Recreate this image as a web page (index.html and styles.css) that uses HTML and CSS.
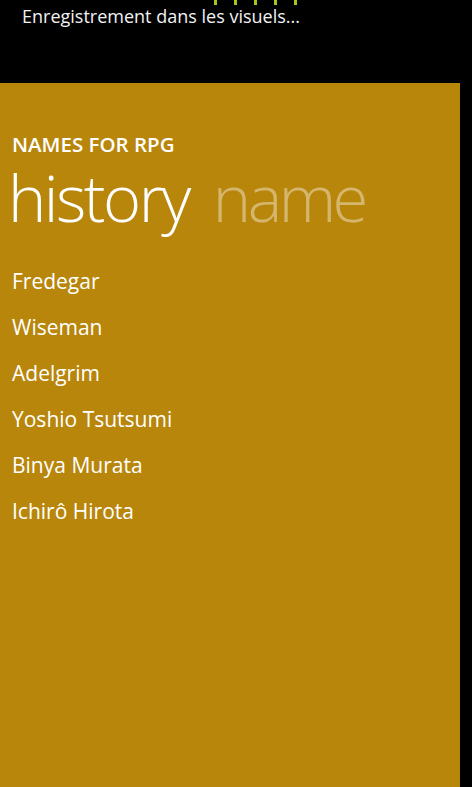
FILE: index.html
```html
<!DOCTYPE html>
<html>
<head>
<meta charset="utf-8">
<link rel="stylesheet" href="styles.css">
</head>
<body>
<div class="status">
  <div class="dots"><span></span><span></span><span></span><span></span><span></span></div>
  <div class="status-text">Enregistrement dans les visuels...</div>
</div>
<div class="panel">
  <div class="app-title">NAMES FOR RPG</div>
  <div class="pivot">
    <span class="pivot-item active">history</span>
    <span class="pivot-item">name</span>
  </div>
  <ul class="list">
    <li>Fredegar</li>
    <li>Wiseman</li>
    <li>Adelgrim</li>
    <li>Yoshio Tsutsumi</li>
    <li>Binya Murata</li>
    <li>Ichirô Hirota</li>
  </ul>
</div>
</body>
</html>
```
FILE: styles.css
```css
html, body {
  margin: 0;
  padding: 0;
  background: #000;
  height: 100%;
  overflow: hidden;
}
body {
  font-family: "Open Sans", "Noto Sans", sans-serif;
  color: #fff;
}
.status {
  height: 83px;
}
.dots {
  display: flex;
  gap: 17px;
  padding-left: 214px;
  height: 5px;
}
.dots span {
  width: 3px;
  height: 5px;
  background: #a6c81e;
}
.status-text {
  padding-left: 22px;
  font-size: 18px;
  line-height: 22px;
  color: #f2f2f2;
}
.panel {
  background: #b8860b;
  width: 460px;
  height: 704px;
  box-sizing: border-box;
  padding-top: 49px;
}
.app-title {
  padding-left: 12px;
  font-size: 20.5px;
  font-weight: 600;
  line-height: 24px;
}
.pivot {
  display: flex;
  gap: 24px;
  padding-left: 8px;
  margin-top: 5px;
  font-size: 65px;
  font-weight: 300;
  line-height: 72px;
  letter-spacing: -2.5px;
}
.pivot-item {
  color: rgba(255, 255, 255, 0.4);
  letter-spacing: -3.5px;
}
.pivot-item.active {
  color: #fff;
  letter-spacing: -2.5px;
}
.list {
  list-style: none;
  margin: 25px 0 0;
  padding: 0 0 0 12px;
}
.list li {
  font-size: 21px;
  line-height: 46px;
}
```
